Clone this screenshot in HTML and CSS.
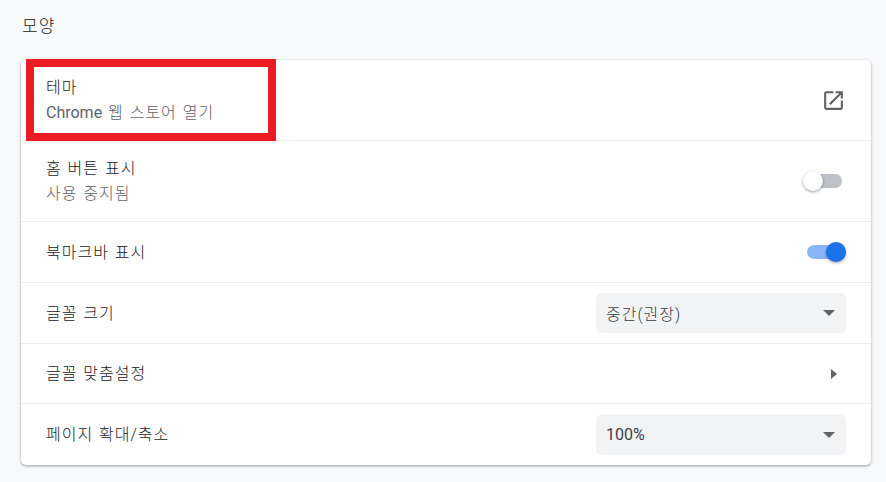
FILE: index.html
```html
<!DOCTYPE html>
<html lang="ko">
<head>
<meta charset="utf-8">
<title>모양</title>
<link rel="stylesheet" href="styles.css">
</head>
<body>
<h2 class="title">모양</h2>
<div class="card">
  <div class="row row-two">
    <div class="label"><div>테마</div><div class="sub"><span class="latin">Chrome</span> 웹 스토어 열기</div></div>
    <svg class="ext" width="25" height="25" viewBox="0 0 24 24"><path fill="#5f6368" d="M19 19H5V5h7V3H5a2 2 0 0 0-2 2v14a2 2 0 0 0 2 2h14c1.1 0 2-.9 2-2v-7h-2v7zM14 3v2h3.59l-9.83 9.83 1.41 1.41L19 6.41V10h2V3h-7z"/></svg>
  </div>
  <div class="row row-two">
    <div class="label"><div>홈 버튼 표시</div><div class="sub">사용 중지됨</div></div>
    <div class="toggle"><span class="track"></span><span class="knob"></span></div>
  </div>
  <div class="row row-one">
    <div class="label">북마크바 표시</div>
    <div class="toggle on"><span class="track"></span><span class="knob"></span></div>
  </div>
  <div class="row row-one">
    <div class="label">글꼴 크기</div>
    <div class="select"><span>중간(권장)</span><i class="caret"></i></div>
  </div>
  <div class="row row-one row-short">
    <div class="label">글꼴 맞춤설정</div>
    <i class="arrow"></i>
  </div>
  <div class="row row-one row-last">
    <div class="label">페이지 확대/축소</div>
    <div class="select"><span class="latin">100%</span><i class="caret"></i></div>
  </div>
  <div class="callout"></div>
</div>
</body>
</html>
```
FILE: styles.css
```css
* { box-sizing: border-box; }
html, body { margin: 0; height: 482px; overflow: hidden; }
body {
  background: #f8f9fa;
  padding: 0 15px 0 21px;
  font-family: Roboto, "Noto Sans CJK KR", sans-serif;
  font-weight: 300;
  color: #202124;
  font-size: 16px;
  letter-spacing: 1px;
  word-spacing: 1px;
}
.latin { letter-spacing: 0; font-weight: 400; }
.title {
  margin: 0;
  height: 60px;
  padding: 14px 0 0 1px;
  font-size: 17px;
  font-weight: 300;
  line-height: 24px;
}
.card {
  position: relative;
  height: 405px;
  background: #fff;
  border-radius: 5px;
  box-shadow: 0 1px 2px rgba(60,64,67,.3), 0 1px 3px 1px rgba(60,64,67,.15);
}
.row {
  display: flex;
  align-items: center;
  justify-content: space-between;
  padding: 0 25px 0 25px;
  border-bottom: 1px solid #e8eaed;
}
.row-two { height: 81px; }
.row-one { height: 61px; }
.row-short { height: 60px; }
.row-last { border-bottom: 0; }
.label { line-height: 25px; }
.sub { color: #5f6368; }
.ext { margin-right: 0; }
.toggle { position: relative; width: 40px; height: 20px; margin-right: -1px; }
.track {
  position: absolute; left: 1px; top: 3px;
  width: 34px; height: 14px; border-radius: 7px;
  background: #bdc1c6;
}
.knob {
  position: absolute; left: -4px; top: 0;
  width: 20px; height: 20px; border-radius: 50%;
  background: #fff;
  box-shadow: 0 1px 3px rgba(0,0,0,.4);
}
.toggle.on .track { left: 0; background: #8ab4f8; width: 34px; }
.toggle.on .knob { left: 19px; background: #1a73e8; }
.select {
  display: flex; align-items: center; justify-content: space-between;
  width: 250px; height: 40px;
  padding: 0 11px 0 10px;
  background: #f1f3f4;
  border-radius: 5px;
  color: #3c4043;
}
.caret {
  width: 0; height: 0;
  border-left: 6px solid transparent;
  border-right: 6px solid transparent;
  border-top: 6px solid #5f6368;
}
.arrow {
  width: 0; height: 0;
  margin-right: 9px;
  border-top: 5px solid transparent;
  border-bottom: 5px solid transparent;
  border-left: 6px solid #5f6368;
}
.callout {
  position: absolute; left: 5px; top: -1px;
  width: 250px; height: 82px;
  border: 8px solid #ed1c24;
}
```
